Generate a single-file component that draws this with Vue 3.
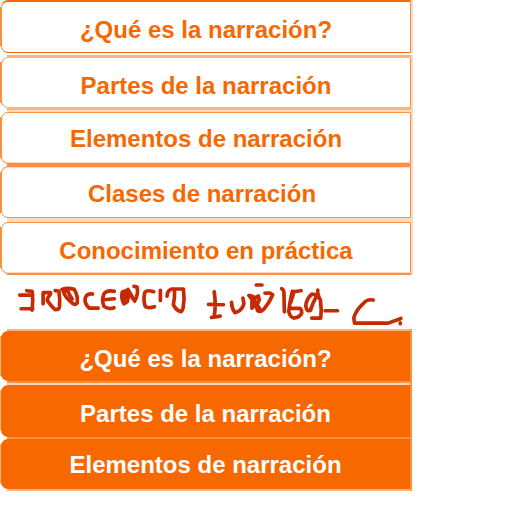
<script setup>
const topics = [
  { label: '¿Qué es la narración?', row: 'first', text: 'text-low' },
  { label: 'Partes de la narración', row: 'soft', text: 'text-low' },
  { label: 'Elementos de narración', row: 'third', text: 'text-high' },
  { label: 'Clases de narración', row: 'fourth', text: 'text-mid' },
  { label: 'Conocimiento en práctica', row: 'fifth', text: 'text-low' },
]
const selected = [
  { label: '¿Qué es la narración?', row: 'opening', text: 'text-low' },
  { label: 'Partes de la narración', row: 'middle', text: 'text-low' },
  { label: 'Elementos de narración', row: 'closing', text: 'text-high' },
]
</script>

<template>
  <main class="page">
    <ul class="menu outlined">
      <li v-for="t in topics" :key="t.label" class="row" :class="t.row">
        <button type="button" class="item" :class="t.text">{{ t.label }}</button>
      </li>
    </ul>

    <svg class="signature" viewBox="0 0 1236 162" role="img" aria-label="Inocencio Zuñiga C.">
      <g transform="translate(30 0)">
        <path d="M29 60H68M50 47L66 49Q70 75 66 105M33 101H68" />
        <path d="M99 86V53H121Q124 57 114 66L111 76Q122 92 135 104Q147 104 148 95Q150 70 146 48L135 47" />
        <path d="M155 43Q172 37 192 43Q204 62 201 84Q193 93 182 80Q166 68 159 49L172 47Q178 60 186 72" />
        <path d="M247 57Q230 55 225 69Q222 86 237 99H264" />
      </g>
      <g transform="translate(300 0)">
        <path d="M42 49Q22 44 12 55Q3 74 11 94Q24 104 41 98M10 74L42 71" />
        <path d="M71 86Q61 70 66 51L80 46Q73 65 75 84L84 58L83 43Q92 65 103 78Q115 58 110 36L101 34M71 55L81 80L87 50L101 75" />
        <path d="M160 50Q138 43 133 53Q128 78 135 94Q145 101 162 95M180 46V76" />
        <path d="M200 63Q201 46 214 42H249Q253 72 248 99Q244 112 238 109Q223 101 219 88Q224 66 222 45" />
      </g>
      <g transform="translate(600 0)">
        <path d="M41 50Q47 86 41 125M24 88L69 89M33 127L59 123" />
        <path d="M93 82Q93 99 103 113Q124 108 130 86L127 69" />
        <path d="M145 61L154 73V99M150 62L163 67L162 90L154 99M159 72L173 63L176 74L167 94L171 107Q179 112 190 102Q207 82 216 59L208 54H193M166 84L177 101M167 30H184" />
        <path d="M243 41Q251 44 250 59L251 110M275 49Q267 81 264 109Q268 126 279 129Q297 128 303 114Q303 101 296 100H270" />
      </g>
      <g transform="translate(900 0)">
        <path d="M-20 50L-30 82M1 47L-22 50M30 105Q18 112 15 93Q17 70 34 57Q47 58 47 64Q36 84 29 105M51 45Q49 58 59 75Q63 105 60 129H33M73 107H110" />
        <path d="M217 75Q198 71 187 86Q165 106 159 128L161 144H262L300 130M298 143V146" />
      </g>
    </svg>

    <ul class="menu filled">
      <li v-for="t in selected" :key="t.label" class="row" :class="t.row">
        <button type="button" class="item" :class="t.text">{{ t.label }}</button>
      </li>
    </ul>
  </main>
</template>

<style>
body {
  margin: 0;
  background: #fff;
}
</style>

<style scoped>
.page {
  --strong: #f76800;
  --medium: #fb9042;
  --soft: #fcb283;
  --pale: #fdd9c1;
  font-family: "Liberation Sans", Arial, sans-serif;
  max-width: 413px;
}

.menu {
  list-style: none;
  margin: 0;
  padding: 0;
}

.row {
  --above: transparent;
  --below: transparent;
  --top: 0px;
  --bottom: 0px;
  --side: var(--medium);
  box-sizing: border-box;
  display: flex;
  padding: var(--top) 0 var(--bottom) 1px;
  border-right: 2px solid var(--pale);
  background:
    linear-gradient(var(--above), var(--above)) 7px 0 / 100% var(--top) no-repeat,
    linear-gradient(var(--below), var(--below)) 7px 100% / 100% var(--bottom) no-repeat,
    linear-gradient(transparent 7px, var(--side) 7px, var(--side) calc(100% - 7px), transparent calc(100% - 7px)) 0 0 / 2px 100% no-repeat;
}

.item {
  box-sizing: border-box;
  flex: 1;
  height: 52px;
  margin: 0;
  padding: 0;
  border: 1px solid var(--medium);
  border-radius: 7px 0 0 7px;
  background: #fff;
  color: var(--strong);
  font: bold 24px/28px "Liberation Sans", Arial, sans-serif;
  text-align: center;
  cursor: pointer;
}

.text-low {
  padding-top: 6px;
}

.text-mid {
  padding-top: 4px;
}

.text-high {
  padding-top: 2px;
}

.first {
  margin-bottom: 2px;
}

.first .item {
  height: 53px;
  border-top: 2px solid var(--strong);
  border-bottom-color: var(--strong);
}

.soft {
  --above: var(--soft);
  --below: var(--soft);
  --top: 2px;
  --bottom: 2px;
}

.soft .item {
  height: 51px;
  border-top-color: var(--soft);
  border-bottom-color: var(--soft);
}

.third {
  --above: var(--pale);
  --below: var(--medium);
  --top: 2px;
  --bottom: 1px;
}

.third .item,
.fifth .item {
  box-shadow: inset 0 -1px var(--pale);
}

.fourth {
  --above: var(--medium);
  --below: var(--pale);
  --top: 1px;
  --bottom: 2px;
}

.fourth .item {
  padding-right: 8px;
  box-shadow: inset 0 1px var(--pale);
}

.fifth {
  --above: var(--pale);
  --below: var(--medium);
  --top: 2px;
  --bottom: 1px;
}

.signature {
  display: block;
  width: 100%;
  fill: none;
  stroke: #c52a04;
  stroke-width: 11;
  stroke-linecap: round;
  stroke-linejoin: round;
}

.filled {
  margin-right: 1px;
}

.filled .row {
  --side: var(--soft);
  --top: 2px;
  border-right-color: var(--medium);
}

.filled .item {
  height: 50px;
  border: 0;
  background: var(--strong);
  color: #fff;
}

.opening {
  --above: var(--soft);
  --below: var(--medium);
  --bottom: 2px;
}

.middle {
  --above: var(--pale);
}

.filled .middle .item {
  height: 52px;
}

.closing {
  --above: var(--medium);
  --below: var(--soft);
  --bottom: 2px;
}
</style>
